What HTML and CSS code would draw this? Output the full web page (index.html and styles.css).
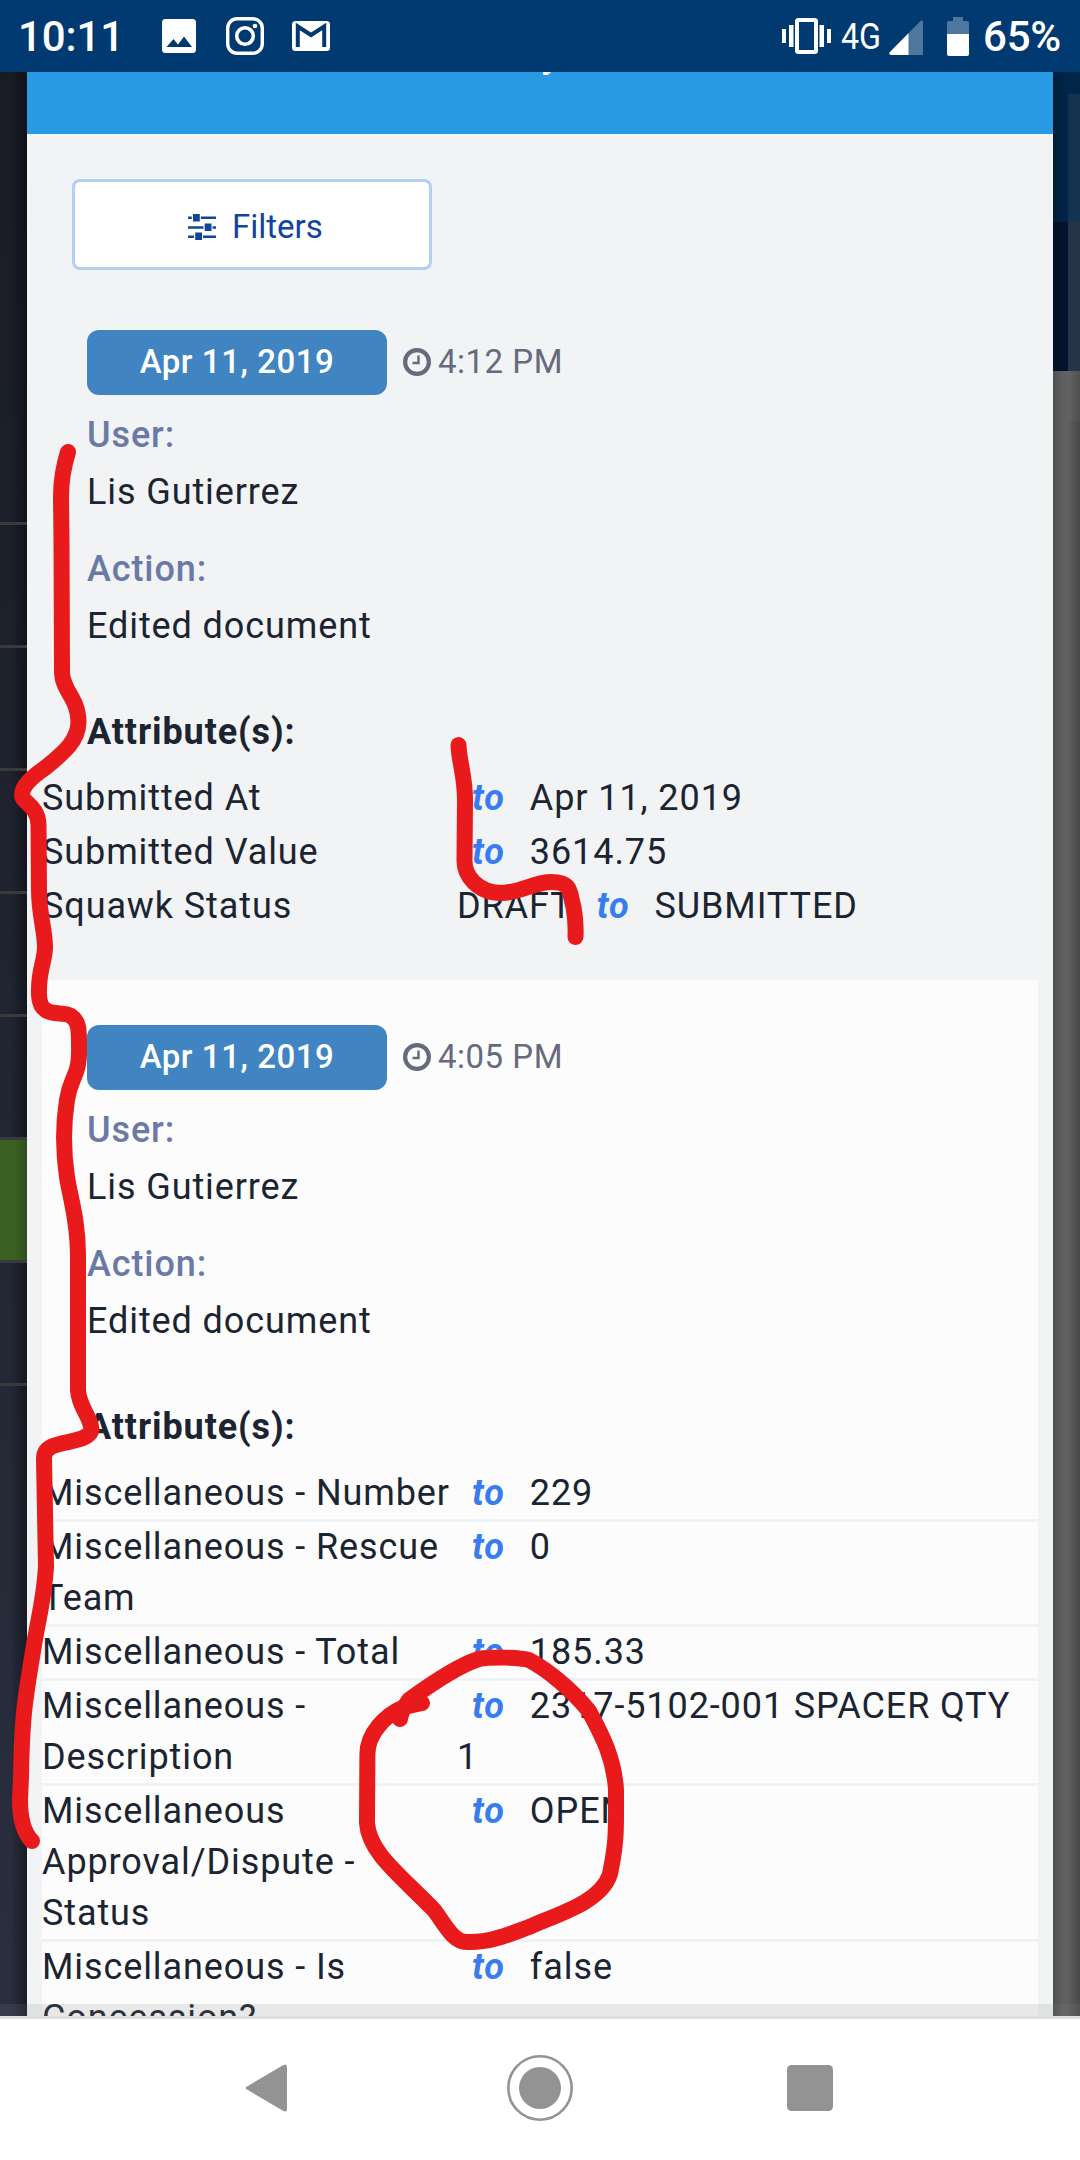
FILE: index.html
```html
<!DOCTYPE html>
<html lang="en">
<head>
<meta charset="utf-8">
<title>History</title>
<link rel="stylesheet" href="styles.css">
</head>
<body>
<div class="screen">
  <header class="status">
    <span class="clock">10:11</span>
    <svg class="ic-photo" width="34" height="34" viewBox="0 0 34 34"><path fill="#fff" fill-rule="evenodd" d="M3.500 0h27a3.500 3.500 0 0 1 3.500 3.500v27a3.500 3.500 0 0 1-3.500 3.500h-27a3.500 3.500 0 0 1-3.500-3.500v-27a3.500 3.500 0 0 1 3.500-3.500zM4.500 28h25.500L22 17.500l-6 8-4.500-5.500z"/></svg>
    <svg class="ic-camera" width="38" height="38" viewBox="0 0 38 38" fill="none" stroke="#fff"><rect x="1.700" y="1.700" width="34.600" height="34.600" rx="9.500" stroke-width="3.400"/><circle cx="19" cy="19" r="8.300" stroke-width="3.600"/><circle cx="29" cy="9" r="2.300" fill="#fff" stroke="none"/></svg>
    <svg class="ic-mail" width="38" height="30" viewBox="0 0 38 30"><rect width="38" height="30" rx="3.500" fill="#fff"/><path d="M5.800 26V5.500L19 14l13.200-8.500V26" fill="none" stroke="#003a70" stroke-width="4"/></svg>
    <span class="grow"></span>
    <svg class="ic-vibrate" width="49" height="36" viewBox="0 0 49 36"><rect x="15" y="2" width="19" height="32" rx="1.500" fill="none" stroke="#fff" stroke-width="4"/><path d="M0 11h4v14H0zM7 7h4.500v22H7zM37.500 7H42v22h-4.500zM45 11h4v14h-4z" fill="#fff"/></svg>
    <span class="net">4G</span>
    <svg class="ic-signal" width="34" height="35" viewBox="0 0 34 35"><path d="M34 2v33H2q-3-1-1-3L31.500 1Q34-1 34 2z" fill="#4d779e"/><path d="M19.500 13.300V35H2q-3-1-1-3z" fill="#fff"/></svg>
    <svg class="ic-battery" width="22" height="39" viewBox="0 0 22 39"><path d="M6 0h10v4h4a2 2 0 0 1 2 2v11H0V6a2 2 0 0 1 2-2h4z" fill="#4d779e"/><path d="M0 17h22v20a2 2 0 0 1-2 2H2a2 2 0 0 1-2-2z" fill="#fff"/></svg>
    <span class="percent">65%</span>
  </header>

  <main class="stage">
    <aside class="side">
      <i class="cell first"></i><i class="cell"></i><i class="cell"></i><i class="cell"></i><i class="cell"></i><i class="cell"></i><i class="cell green"></i><i class="cell"></i>
    </aside>

    <section class="modal">
      <div class="title"><span>y</span></div>
      <button class="filters">
        <svg width="28" height="26" viewBox="0 0 28 26"><path d="M0 2.600h28v2.400H0zM0 12.300h28v2.400H0zM0 21.500h28v2.400H0z" fill="#10459b"/><path d="M3.800 0h9v7.500h-9zM15.500 9.500h9V17h-9zM6 18.500h9V26H6z" fill="#fff"/><path d="M5 0h6.800v7.500H5zM16.700 9.500h6.800V17h-6.800zM7.200 18.500H14V26H7.200z" fill="#10459b"/></svg>
        <span>Filters</span>
      </button>

      <article class="entry">
        <div class="when">
          <span class="date">Apr 11, 2019</span>
          <svg width="28" height="28" viewBox="0 0 28 28" fill="none" stroke="#666a7d"><circle cx="14" cy="14" r="11.900" stroke-width="4.200"/><path d="M15.500 7.500V15H9.500" stroke-width="2.400"/></svg>
          <span class="time">4:12 PM</span>
        </div>
        <p class="label">User:</p>
        <p class="value">Lis Gutierrez</p>
        <p class="label action">Action:</p>
        <p class="value">Edited document</p>
        <p class="attrs">Attribute(s):</p>
        <div class="rows">
          <div class="row"><span>Submitted At</span><span><em>to</em>Apr 11, 2019</span></div>
          <div class="row"><span>Submitted Value</span><span><em>to</em>3614.75</span></div>
          <div class="row"><span>Squawk Status</span><span>DRAFT <em>to</em>SUBMITTED</span></div>
        </div>
      </article>

      <article class="entry light">
        <div class="when">
          <span class="date">Apr 11, 2019</span>
          <svg width="28" height="28" viewBox="0 0 28 28" fill="none" stroke="#666a7d"><circle cx="14" cy="14" r="11.900" stroke-width="4.200"/><path d="M15.500 7.500V15H9.500" stroke-width="2.400"/></svg>
          <span class="time">4:05 PM</span>
        </div>
        <p class="label">User:</p>
        <p class="value">Lis Gutierrez</p>
        <p class="label action">Action:</p>
        <p class="value">Edited document</p>
        <p class="attrs">Attribute(s):</p>
        <div class="rows">
          <div class="row"><span>Miscellaneous - Number</span><span><em>to</em>229</span></div>
          <div class="row"><span>Miscellaneous - Rescue<br>Team</span><span><em>to</em>0</span></div>
          <div class="row"><span>Miscellaneous - Total</span><span><em>to</em>185.33</span></div>
          <div class="row"><span>Miscellaneous -<br>Description</span><span><em>to</em>2317-5102-001 SPACER QTY<br>1</span></div>
          <div class="row"><span>Miscellaneous<br>Approval/Dispute -<br>Status</span><span><em>to</em>OPEN</span></div>
          <div class="row"><span>Miscellaneous - Is<br>Concession?</span><span><em>to</em>false</span></div>
        </div>
      </article>
    </section>

    <aside class="edge">
      <i class="navy"></i><i class="deep"></i><i class="gray"></i>
      <i class="panel"></i>
    </aside>
    <div class="strip"></div>
  </main>

  <footer class="nav">
    <svg width="42" height="48" viewBox="0 0 42 48"><path d="M2 22.500 38 1.200Q42-1 42 3v42q0 4-4 1.800L2 25.500Q-1 24 2 22.500z" fill="#939393"/></svg>
    <svg width="66" height="66" viewBox="0 0 66 66"><circle cx="33" cy="33" r="31.700" fill="none" stroke="#939393" stroke-width="2.600"/><circle cx="33" cy="33" r="21" fill="#939393"/></svg>
    <svg width="46" height="46" viewBox="0 0 46 46"><rect width="46" height="46" rx="4.500" fill="#939393"/></svg>
  </footer>

  <svg class="ink" width="1080" height="2160" viewBox="0 0 1080 2160" fill="none" stroke="#e81a1b" stroke-width="16" stroke-linecap="round" stroke-linejoin="round">
    <path d="M68 452C63 468 61 480 61 497L61.500 540L62 673C63 692 78 697 78.500 722C78 740 66 751 45 768C32 777 22 786 22 795C22 803 38 805 38.500 825L39 890C39 915 45 930 45 947C45 962 38 970 39 995C40 1020 62 1010 71 1016C79 1021 79 1030 79 1045C80 1078 71 1074 67 1100C63 1125 63 1150 67 1177C70 1197 78 1220 78 1255L78 1390C79 1408 91 1416 91.500 1430C86 1447 44 1437 44 1458L46 1567C44 1600 38 1620 34 1645C26 1695 22 1710 21 1777L20 1800C20 1822 25 1834 32 1841"/>
    <path d="M458.500 745C459 762 465 775 465 800L464.500 860C464 875 477 893 502 893C522 892 535 882 551 882C573 882 569 893 573.500 907C576 920 576 925 575.500 937"/>
    <path d="M422 1703L404 1707C385 1715 367 1734 367.400 1755L367 1823C369 1853 400 1875 434 1910C443 1921 452 1942 467 1942C490 1943 510 1934 529 1927C555 1915 601 1903 610 1874C617 1840 616 1830 616 1790C614 1755 599 1730 589 1711C572 1690 548 1670 529 1660C520 1657 490 1657 479 1659C456 1666 420 1692 409 1700Q401 1711 400 1719"/>
  </svg>
</div>
</body>
</html>
```
FILE: styles.css
```css
* { box-sizing: border-box; }
body { margin: 0; font-family: Roboto, sans-serif; color: #1b2430; }
p { margin: 0; }
i { display: block; }
.screen { position: relative; width: 1080px; height: 2160px; overflow: hidden; display: flex; flex-direction: column; background: #fff; }

.status { height: 72px; flex: none; display: flex; align-items: center; background: #003a70; color: #fff; padding: 0 20px 0 18px; }
.clock, .percent { font-size: 42px; font-weight: 500; line-height: 72px; }
.clock { width: 144px; letter-spacing: -0.1px; padding-top: 2px; }
.ic-camera { margin-left: 30px; }
.ic-mail { margin-left: 28px; }
.grow { flex: 1; }
.net { width: 40px; margin-left: 10px; font-size: 37px; line-height: 72px; padding-top: 1px; white-space: nowrap; transform: scaleX(0.87); transform-origin: 0 50%; }
.ic-signal { margin-left: 8px; margin-top: 2px; }
.ic-battery { margin-left: 24px; }
.percent { width: 77px; margin-left: 14px; padding-top: 2px; white-space: nowrap; letter-spacing: -0.2px; }

.stage { position: relative; height: 1944px; flex: none; overflow: hidden; display: grid; grid-template-columns: 27px 1026px 27px; }
.side { background: linear-gradient(90deg, transparent 10px, rgba(0,0,0,.4)), linear-gradient(#191c26, #202531 50%, #2a2f40); }
.cell { height: 123px; border-bottom: 3px solid #393a39; }
.cell.first { height: 453px; }
.cell.green { background: linear-gradient(90deg, transparent 14px, rgba(0,0,0,.2)), #3a6122; }

.modal { background: #f1f3f5; overflow: hidden; height: 1944px; }
.title { height: 62px; background: #279ae3; color: #fff; overflow: hidden; padding-left: 514px; font-size: 40px; font-weight: 500; line-height: 40px; }
.title span { display: block; margin-top: -38px; }
.filters { display: flex; align-items: center; width: 360px; height: 91px; margin: 45px 0 15px 45px; padding: 5px 0 0 113px; border: 3px solid #b5cff3; border-radius: 8px; background: #fff; font: 33px/48px Roboto, sans-serif; color: #10459b; gap: 16px; }

.entry { width: 996px; margin-left: 15px; padding: 45px 0; letter-spacing: 0.9px; font-size: 36px; line-height: 51px; }
.light { background: #fcfcfd; }
.when { display: flex; align-items: center; height: 65px; margin-left: 45px; }
.date { width: 300px; height: 65px; border-radius: 12px; background: #4085c1; color: #fff; text-align: center; font-size: 33px; font-weight: 500; line-height: 63px; letter-spacing: .55px; }
.when svg { margin: -2px 7px 0 16px; }
.time { font-size: 33px; line-height: 63px; height: 65px; color: #666a7d; letter-spacing: .5px; }
.label, .value, .attrs { margin-left: 45px; }
.label { margin-top: 15px; font-weight: 500; color: #6b79a5; }
.value { margin-top: 6px; }
.label.action { margin-top: 26px; }
.attrs { margin-top: 55px; margin-bottom: 15px; font-weight: 700; }
.row { display: grid; grid-template-columns: 415px 1fr; border-bottom: 3px solid #eff2f6; white-space: nowrap; }
.row em { margin: 0 25px 0 15px; font-weight: 700; color: #377df0; }

.edge { position: relative; }
.edge i { background-image: linear-gradient(90deg, rgba(0,0,0,.25), transparent 14px); }
.navy { height: 150px; background-color: #00264a; }
.deep { height: 149px; background-color: #03142f; }
.gray { height: 1645px; background-color: #606060; }
.edge .gray { background-image: linear-gradient(90deg, rgba(0,0,0,.18), transparent 10px, transparent 14px, rgba(0,0,0,.25)); }
.edge .panel { position: absolute; right: 0; top: 22px; width: 12px; height: 327px; background: linear-gradient(rgba(110,110,110,.18) 128px, rgba(130,130,130,.28) 128px, rgba(130,130,130,.28) 277px, rgba(130,130,130,.12) 277px); }
.strip { position: absolute; left: 0; right: 0; bottom: 0; height: 12px; background: rgba(128,128,128,.16); }

.nav { flex: 1; display: flex; align-items: center; border-top: 3px solid #dfdfdf; padding: 0 247px 3px 245px; justify-content: space-between; background: #fff; }
.nav svg:nth-child(2) { margin-left: 6px; }
.ink { position: absolute; left: 0; top: 0; }
```
